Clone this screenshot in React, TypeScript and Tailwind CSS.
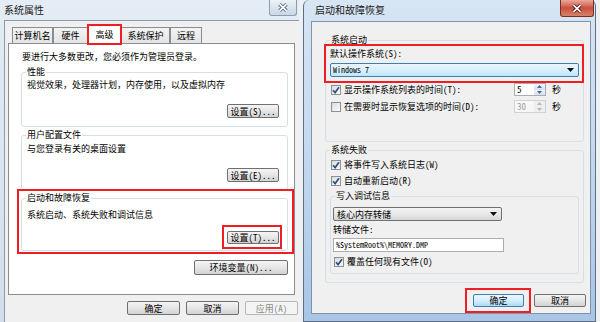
import type { ReactNode } from 'react';

const FONT = "font-['Noto_Sans_Mono_CJK_SC','Liberation_Mono','Noto_Sans_CJK_SC',monospace]";

function Btn({
  children,
  className = '',
  variant = 'normal',
}: {
  children: ReactNode;
  className?: string;
  variant?: 'normal' | 'default' | 'disabled';
}) {
  const look =
    variant === 'default'
      ? 'border-[#3c7fb1] bg-linear-to-b from-[#eef8fe] via-[#d6eefc] to-[#abdaf5] text-black'
      : variant === 'disabled'
        ? 'border-[#b4b8bb] bg-[#f4f4f4] text-[#8a8a8a]'
        : 'border-[#707070] bg-linear-to-b from-[#f5f5f5] via-[#e6e6e6] to-[#d2d2d2] text-black';
  return (
    <div
      className={`flex shrink-0 items-center justify-center rounded-[2px] border text-[9px] leading-none ${look} ${className}`}
    >
      {children}
    </div>
  );
}

function Group({ title, className = '', children }: { title: string; className?: string; children?: ReactNode }) {
  return (
    <fieldset className={`rounded-[3px] border border-[#d5dfe5] ${className}`}>
      <legend className="ml-[4px] px-[1px] text-[9px] leading-[12px]">{title}</legend>
      {children}
    </fieldset>
  );
}

function Check({ checked }: { checked: boolean }) {
  return (
    <span className="flex h-[10px] w-[10px] shrink-0 items-center justify-center border border-[#8e8f8f] bg-linear-to-br from-[#d8dde3] to-[#fbfbfb]">
      {checked && (
        <svg width="8" height="8" viewBox="0 0 8 8">
          <path d="M1 4.3 L3.1 6.6 L7 1.3" fill="none" stroke="#2d4f82" strokeWidth="1.7" />
        </svg>
      )}
    </span>
  );
}

function Arrow() {
  return (
    <svg width="7" height="4" viewBox="0 0 7 4">
      <path d="M0 0h7L3.5 4z" fill="#111" />
    </svg>
  );
}

function Spin({ value, disabled = false }: { value: string; disabled?: boolean }) {
  return (
    <div
      className={`flex h-[13px] w-[32px] items-stretch border ${disabled ? 'border-[#cfd2d6] bg-[#f7f7f7] text-[#9a9a9a]' : 'border-[#abadb3] bg-white'}`}
    >
      <span className="flex-1 pl-[2px] text-[9px] leading-[11px]">{value}</span>
      <div className="flex w-[11px] flex-col">
        {[0, 1].map((i) => (
          <div
            key={i}
            className={`flex flex-1 items-center justify-center ${disabled ? 'bg-[#eeeeee]' : 'bg-linear-to-b from-[#eef4fb] to-[#d3e2f3]'}`}
          >
            <svg width="5" height="3" viewBox="0 0 5 3">
              <path d={i === 0 ? 'M0 3h5L2.5 0z' : 'M0 0h5L2.5 3z'} fill={disabled ? '#b8b8b8' : '#4d6a8d'} />
            </svg>
          </div>
        ))}
      </div>
    </div>
  );
}

function CloseBtn({ active, className = '' }: { active: boolean; className?: string }) {
  const look = active
    ? 'h-[17px] w-[34px] border-[#7a2d24] bg-linear-to-b from-[#e9a99d] via-[#c94f3e] to-[#d98068]'
    : 'h-[16px] w-[28px] border-[#8f9cae] bg-linear-to-b from-[#eef2f7] via-[#dae3ee] to-[#cbd7e6]';
  return (
    <div className={`flex items-center justify-center rounded-b-[3px] border border-t-0 ${look} ${className}`}>
      <svg width="10" height="9" viewBox="0 0 10 9">
        <path d="M1.5 1.2 L8.5 7.8 M8.5 1.2 L1.5 7.8" stroke={active ? '#4a1510' : '#55657a'} strokeWidth="3.4" />
        <path d="M1.5 1.2 L8.5 7.8 M8.5 1.2 L1.5 7.8" stroke="#fff" strokeWidth="1.7" />
      </svg>
    </div>
  );
}

const TABS = [
  { label: '计算机名', w: 'w-[41px]' },
  { label: '硬件', w: 'w-[35px]' },
  { label: '高级', w: 'w-[33px]', selected: true },
  { label: '系统保护', w: 'w-[49px]' },
  { label: '远程', w: 'w-[32px]' },
];

function SystemProperties() {
  return (
    <div className="flex h-[322px] w-[299px] shrink-0 flex-col bg-linear-to-b from-[#e4ecf5] to-[#d2deeb]">
      <div className="flex h-[20px] items-start justify-between">
        <span className="pl-[4px] pt-[4px] text-[10px] leading-[12px] text-[#1a1a1a]">系统属性</span>
        <CloseBtn active={false} className="mr-[2px]" />
      </div>
      <div className="ml-[4px] flex flex-1 flex-col border-l border-t border-[#8b99ab] bg-[#f0f0f0] pl-[3px] pt-[4px]">
        <div className="flex h-[19px] items-end pl-[4px]">
          {TABS.map((t) =>
            t.selected ? (
              <div key={t.label} className="relative z-10 h-[19px] w-[33px]">
                <div className="flex h-full items-center justify-center border border-b-0 border-[#898c95] bg-white pb-[1px] text-[9px] leading-none">
                  {t.label}
                </div>
                <div className="absolute -inset-x-[1px] -top-[1px] bottom-[-1px] border-2 border-[#f01e23]" />
              </div>
            ) : (
              <div
                key={t.label}
                className={`flex h-[17px] ${t.w} items-center justify-center border border-b-0 border-[#898c95] bg-linear-to-b from-[#f3f3f3] to-[#e3e3e3] pb-[1px] text-[9px] leading-none`}
              >
                {t.label}
              </div>
            ),
          )}
        </div>
        <div className="-mt-px flex h-[252px] w-[287px] flex-col border border-[#898c95] bg-white">
          <p className="mt-[7px] pl-[13px] text-[9px] leading-[12px]">要进行大多数更改，您必须作为管理员登录。</p>

          <Group title="性能" className="mt-[3px] ml-[12px] h-[61px] w-[267px]">
            <p className="mt-[1px] pl-[5px] text-[9px] leading-[12px]">视觉效果，处理器计划，内存使用，以及虚拟内存</p>
            <Btn className="mt-[13px] ml-auto mr-[8px] h-[14px] w-[52px]">设置(S)...</Btn>
          </Group>

          <Group title="用户配置文件" className="mt-[2px] ml-[12px] h-[61px] w-[267px]">
            <p className="mt-[2px] pl-[5px] text-[9px] leading-[12px]">与您登录有关的桌面设置</p>
            <Btn className="mt-[13px] ml-auto mr-[8px] h-[14px] w-[52px]">设置(E)...</Btn>
          </Group>

          <div className="relative mt-[2px] ml-[12px] w-[267px]">
            <Group title="启动和故障恢复" className="h-[59px] w-[267px]">
              <p className="mt-[5px] pl-[5px] text-[9px] leading-[12px]">系统启动、系统失败和调试信息</p>
              <div className="relative mt-[10px] ml-auto mr-[8px] w-[52px]">
                <Btn className="h-[13px] w-[52px]">设置(T)...</Btn>
                <div className="absolute -left-[5px] -right-[3px] -top-[6px] -bottom-[5px] border-2 border-[#f01e23]" />
              </div>
            </Group>
            <div className="absolute -left-[4px] -right-[6px] -top-[3px] -bottom-[3px] border-2 border-[#f01e23]" />
          </div>

          <Btn className="mt-[9px] ml-[185px] h-[15px] w-[94px]">环境变量(N)...</Btn>
        </div>
        <div className="mt-[6px] flex justify-end gap-[6px] pr-[1px]">
          <Btn className="h-[14px] w-[53px]">确定</Btn>
          <Btn className="h-[14px] w-[53px]">取消</Btn>
          <Btn variant="disabled" className="h-[14px] w-[53px]">
            应用(A)
          </Btn>
        </div>
      </div>
    </div>
  );
}

function CheckRow({ checked, label, className = '' }: { checked: boolean; label: string; className?: string }) {
  return (
    <div className={`flex items-center gap-[3px] ${className}`}>
      <Check checked={checked} />
      <span className="text-[9px] leading-[12px]">{label}</span>
    </div>
  );
}

function StartupRecovery() {
  return (
    <div className="flex h-[322px] w-[293px] shrink-0 flex-col rounded-t-[6px] border-x border-b border-[#5d6e85] bg-linear-to-b from-[#d7e5f4] via-[#c3d8ef] to-[#a8c5e6]">
      <div className="flex h-[21px] items-start justify-between">
        <span className="pl-[11px] pt-[4px] text-[10px] leading-[12px] text-[#1a1a1a]">启动和故障恢复</span>
        <CloseBtn active className="mr-[1px]" />
      </div>
      <div className="ml-[7px] flex h-[293px] w-[280px] flex-col border border-[#8193ab] bg-[#f0f0f0]">
        <Group title="系统启动" className="mt-[12px] ml-[13px] h-[108px] w-[259px]">
          <div className="relative mt-[2px] pl-[4px]">
            <p className="text-[9px] leading-[12px]">默认操作系统(S):</p>
            <div className="mt-[3px] flex h-[14px] w-[249px] items-center justify-between rounded-[2px] border border-[#3c7fb1] bg-linear-to-b from-[#eaf6fd] via-[#d9f0fc] to-[#bee6fd] pl-[2px] pr-[4px]">
              <span className="text-[8px] leading-none">Windows 7</span>
              <Arrow />
            </div>
            <div className="absolute -left-[2px] right-[-1px] -top-[4px] -bottom-[6px] border-2 border-[#f01e23]" />
          </div>
          <div className="mt-[6px] flex h-[13px] items-center pl-[5px]">
            <CheckRow checked label="显示操作系统列表的时间(T):" className="w-[183px]" />
            <Spin value="5" />
            <span className="ml-[6px] text-[9px] leading-[12px]">秒</span>
          </div>
          <div className="mt-[4px] flex h-[13px] items-center pl-[5px]">
            <CheckRow checked={false} label="在需要时显示恢复选项的时间(D):" className="w-[183px]" />
            <Spin value="30" disabled />
            <span className="ml-[6px] text-[9px] leading-[12px]">秒</span>
          </div>
        </Group>

        <Group title="系统失败" className="mt-[2px] ml-[13px] h-[139px] w-[259px]">
          <CheckRow checked label="将事件写入系统日志(W)" className="mt-[3px] ml-[5px]" />
          <CheckRow checked label="自动重新启动(R)" className="mt-[4px] ml-[5px]" />
          <Group title="写入调试信息" className="mt-[3px] ml-[4px] h-[84px] w-[249px]">
            <div className="mt-[5px] ml-[2px] flex h-[14px] w-[169px] items-center justify-between rounded-[2px] border border-[#707070] bg-linear-to-b from-[#f4f4f4] via-[#e8e8e8] to-[#d6d6d6] pl-[3px] pr-[4px]">
              <span className="text-[9px] leading-none">核心内存转储</span>
              <Arrow />
            </div>
            <p className="mt-[3px] ml-[2px] text-[9px] leading-[12px]">转储文件:</p>
            <div className="mt-[2px] ml-[2px] flex h-[14px] w-[171px] items-center border border-[#abadb3] bg-white pl-[2px]">
              <span className="text-[8px] leading-none">%SystemRoot%\MEMORY.DMP</span>
            </div>
            <CheckRow checked label="覆盖任何现有文件(O)" className="mt-[4px] ml-[3px]" />
          </Group>
        </Group>

        <div className="mt-[11px] flex justify-end gap-[10px] pr-[4px]">
          <div className="relative">
            <Btn variant="default" className="h-[13px] w-[51px]">
              确定
            </Btn>
            <div className="absolute -left-[8px] -right-[7px] -top-[6px] -bottom-[6px] border-2 border-[#f01e23]" />
          </div>
          <Btn className="h-[13px] w-[52px]">取消</Btn>
        </div>
      </div>
    </div>
  );
}

export default function App() {
  return (
    <div className={`flex h-[322px] w-[600px] gap-[4px] overflow-hidden bg-[#eef1f4] text-black ${FONT}`}>
      <SystemProperties />
      <StartupRecovery />
    </div>
  );
}
